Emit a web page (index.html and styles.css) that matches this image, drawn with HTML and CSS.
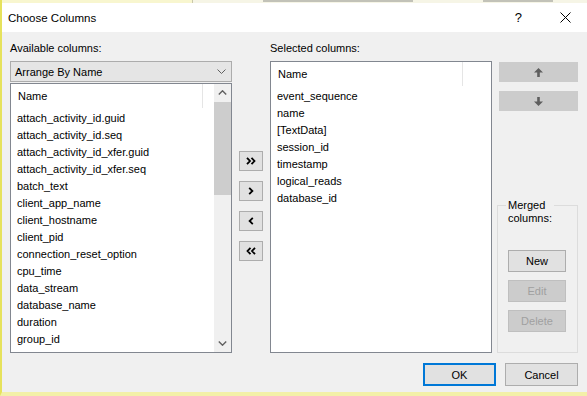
FILE: index.html
```html
<!DOCTYPE html>
<html lang="en">
<head>
    <meta charset="UTF-8">
    <title>Choose Columns</title>
    <link rel="stylesheet" href="styles.css">
</head>
<body>
    <div class="screen">
        <div class="behind">
            <span class="behind-pale"></span>
            <span class="behind-edge"></span>
            <span class="behind-gap"></span>
            <span class="behind-text"></span>
            <span class="behind-gap"></span>
            <span class="behind-text short"></span>
        </div>

        <div class="titlebar">
            <span class="title">Choose Columns</span>
            <span class="help">?</span>
            <svg class="close" width="11" height="11" viewBox="0 0 11 11">
                <path d="M0.5 0.5 L10.5 10.5 M10.5 0.5 L0.5 10.5" stroke="#000" stroke-width="1" fill="none"/>
            </svg>
        </div>

        <div class="content">
            <div class="panes">
                <!-- available -->
                <div class="pane">
                    <div class="label">Available columns:</div>
                    <div class="combo">
                        <span>Arrange By Name</span>
                        <svg width="9" height="5" viewBox="0 0 9 5">
                            <path d="M0.5 0.5 L4.5 4.5 L8.5 0.5" stroke="#606060" fill="none"/>
                        </svg>
                    </div>
                    <div class="list list-available">
                        <div class="list-main">
                            <div class="list-header"><span class="header-cell">Name</span></div>
                            <ul class="items">
                                <li>attach_activity_id.guid</li>
                                <li>attach_activity_id.seq</li>
                                <li>attach_activity_id_xfer.guid</li>
                                <li>attach_activity_id_xfer.seq</li>
                                <li>batch_text</li>
                                <li>client_app_name</li>
                                <li>client_hostname</li>
                                <li>client_pid</li>
                                <li>connection_reset_option</li>
                                <li>cpu_time</li>
                                <li>data_stream</li>
                                <li>database_name</li>
                                <li>duration</li>
                                <li>group_id</li>
                            </ul>
                        </div>
                        <div class="scrollbar">
                            <div class="scroll-btn">
                                <svg width="9" height="5" viewBox="0 0 9 5">
                                    <path d="M0.8 4.5 L4.5 0.8 L8.2 4.5" stroke="#606060" stroke-width="1.4" fill="none"/>
                                </svg>
                            </div>
                            <div class="scroll-thumb"></div>
                            <div class="scroll-track"></div>
                            <div class="scroll-btn">
                                <svg width="9" height="5" viewBox="0 0 9 5">
                                    <path d="M0.8 0.5 L4.5 4.2 L8.2 0.5" stroke="#606060" stroke-width="1.4" fill="none"/>
                                </svg>
                            </div>
                        </div>
                    </div>
                </div>

                <!-- move buttons -->
                <div class="movers">
                    <button class="btn mover">
                        <svg width="10" height="8" viewBox="0 0 10 8">
                            <path d="M1 0.8 L4 4 L1 7.2 M5.5 0.8 L8.5 4 L5.5 7.2" stroke="#000" stroke-width="1.8" fill="none"/>
                        </svg>
                    </button>
                    <button class="btn mover">
                        <svg width="6" height="8" viewBox="0 0 6 8">
                            <path d="M1.2 0.8 L4.4 4 L1.2 7.2" stroke="#000" stroke-width="1.8" fill="none"/>
                        </svg>
                    </button>
                    <button class="btn mover">
                        <svg width="6" height="8" viewBox="0 0 6 8">
                            <path d="M4.8 0.8 L1.6 4 L4.8 7.2" stroke="#000" stroke-width="1.8" fill="none"/>
                        </svg>
                    </button>
                    <button class="btn mover">
                        <svg width="10" height="8" viewBox="0 0 10 8">
                            <path d="M4.5 0.8 L1.5 4 L4.5 7.2 M9 0.8 L6 4 L9 7.2" stroke="#000" stroke-width="1.8" fill="none"/>
                        </svg>
                    </button>
                </div>

                <!-- selected -->
                <div class="pane">
                    <div class="label">Selected columns:</div>
                    <div class="list list-selected">
                        <div class="list-main">
                            <div class="list-header"><span class="header-cell">Name</span></div>
                            <ul class="items">
                                <li>event_sequence</li>
                                <li>name</li>
                                <li>[TextData]</li>
                                <li>session_id</li>
                                <li>timestamp</li>
                                <li>logical_reads</li>
                                <li>database_id</li>
                            </ul>
                        </div>
                    </div>
                </div>

                <!-- order + merged -->
                <div class="side">
                    <button class="btn order">
                        <svg width="9" height="9" viewBox="0 0 9 9">
                            <path d="M4.5 0 L9 4.5 L5.8 4.5 L5.8 9 L3.2 9 L3.2 4.5 L0 4.5 Z" fill="#5e5e5e"/>
                        </svg>
                    </button>
                    <button class="btn order">
                        <svg width="9" height="9" viewBox="0 0 9 9">
                            <path d="M4.5 9 L9 4.5 L5.8 4.5 L5.8 0 L3.2 0 L3.2 4.5 L0 4.5 Z" fill="#5e5e5e"/>
                        </svg>
                    </button>
                    <div class="group">
                        <div class="group-title">Merged columns:</div>
                        <div class="group-buttons">
                            <button class="btn">New</button>
                            <button class="btn disabled">Edit</button>
                            <button class="btn disabled">Delete</button>
                        </div>
                    </div>
                </div>
            </div>

            <div class="footer">
                <button class="btn default">OK</button>
                <button class="btn">Cancel</button>
            </div>
        </div>
    </div>
</body>
</html>
```

FILE: styles.css
```css
* {
    margin: 0;
    padding: 0;
    box-sizing: border-box;
}

body {
    width: 587px;
    height: 396px;
    overflow: hidden;
    background-color: #f0f0f0;
    font-family: "Liberation Sans", Arial, sans-serif;
    font-size: 11px;
    color: #000;
}

.screen {
    height: 396px;
    display: flex;
    flex-direction: column;
    border-left: 2px solid #e6e25c;
    border-bottom: 4px solid #f3f0a8;
}

/* window behind the dialog */
.behind {
    height: 3px;
    display: flex;
    background-color: #f6f5e6;
}

.behind-pale {
    width: 190px;
    background-color: #f8f6cf;
}

.behind-edge {
    width: 1px;
    background-color: #c9c7aa;
}

.behind-gap {
    width: 70px;
}

.behind-text {
    width: 150px;
    height: 2px;
    background-color: #c2c2b8;
}

.behind-text.short {
    width: 70px;
}

/* title bar */
.titlebar {
    height: 29px;
    background-color: #fff;
    display: flex;
    align-items: center;
    padding: 0 16px 0 6px;
}

.title {
    font-size: 11.5px;
}

.help {
    margin-left: auto;
    margin-right: 38px;
    font-size: 13px;
}

.close {
    display: block;
}

/* dialog body */
.content {
    flex: 1;
    display: flex;
    flex-direction: column;
    padding: 9px 9px 0 8px;
}

.panes {
    height: 312px;
    display: grid;
    grid-template-columns: 222px 24px 222px 79px;
    column-gap: 7px;
}

.pane {
    display: flex;
    flex-direction: column;
    min-height: 0;
}

.label {
    height: 20px;
    line-height: 14px;
}

.combo {
    height: 21px;
    display: flex;
    align-items: center;
    justify-content: space-between;
    padding: 0 5px 0 4px;
    background-color: #e5e5e5;
    border: 1px solid #acacac;
}

.combo svg {
    display: block;
}

.list {
    flex: 1;
    display: flex;
    background-color: #fff;
    border: 1px solid #828790;
    min-height: 0;
}

.list-available {
    margin-top: 1px;
}

.list-main {
    flex: 1;
    overflow: hidden;
}

.list-header {
    height: 24px;
    display: flex;
}

.header-cell {
    width: 192px;
    height: 24px;
    line-height: 24px;
    padding-left: 7px;
    border-right: 1px solid #e5e5e5;
}

.items {
    list-style: none;
    padding-top: 1px;
}

.items li {
    height: 17px;
    line-height: 18px;
    padding-left: 6px;
    white-space: nowrap;
}

.scrollbar {
    width: 17px;
    display: flex;
    flex-direction: column;
    background-color: #f0f0f0;
}

.scroll-btn {
    height: 17px;
    display: flex;
    align-items: center;
    justify-content: center;
}

.scroll-thumb {
    height: 93px;
    margin-top: 1px;
    background-color: #cdcdcd;
}

.scroll-track {
    flex: 1;
}

/* buttons */
.btn {
    display: flex;
    align-items: center;
    justify-content: center;
    font-family: inherit;
    font-size: 11px;
    color: #000;
    background-color: #e1e1e1;
    border: 1px solid #adadad;
}

.btn svg {
    display: block;
}

.movers {
    display: flex;
    flex-direction: column;
    gap: 10px;
    padding-top: 110px;
}

.mover {
    height: 20px;
}

.side {
    display: flex;
    flex-direction: column;
    padding-top: 21px;
}

.order {
    height: 20px;
    margin-bottom: 9px;
    background-color: #cccccc;
    border-color: #cccccc;
}

.group {
    flex: 1;
    margin: 85px 0 0 -2px;
    border: 1px solid #dcdcdc;
    padding-left: 10px;
}

.group-title {
    width: 48px;
    margin: -7px 0 0 -2px;
    padding: 0 2px;
    line-height: 13px;
    background-color: #f0f0f0;
}

.group-buttons {
    display: flex;
    flex-direction: column;
    gap: 8px;
    margin-top: 25px;
}

.group-buttons .btn {
    width: 58px;
    height: 22px;
}

.btn.disabled {
    color: #a0a0a0;
    background-color: #cccccc;
    border-color: #bfbfbf;
}

.footer {
    display: flex;
    justify-content: flex-end;
    gap: 9px;
    margin-top: 10px;
}

.footer .btn {
    width: 73px;
    height: 23px;
}

.btn.default {
    border: 2px solid #0078d7;
}
```
